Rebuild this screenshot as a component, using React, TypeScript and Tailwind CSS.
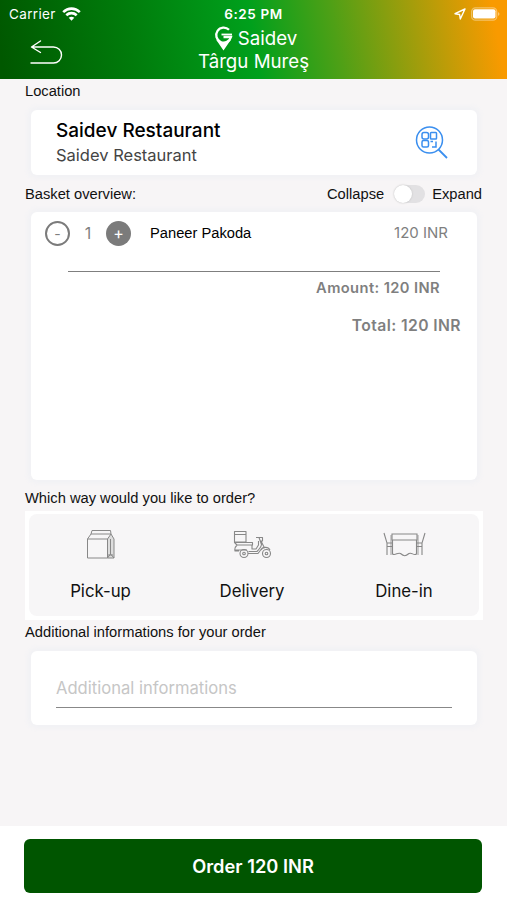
import type { ReactNode } from "react";

const sans = "font-['Liberation_Sans',Arial,sans-serif]";
const card = "rounded-[6px] bg-white shadow-[0_0_4px_4px_#f2f2f5]";

function Label({ children }: { children: ReactNode }) {
  return <span className={`${sans} text-[14.7px] leading-[18px] whitespace-nowrap text-[#111]`}>{children}</span>;
}

function StatusBar() {
  return (
    <div className="grid h-[27px] grid-cols-3 items-center px-[9px] text-[13.5px] leading-[18px]">
      <div className="flex items-center gap-[6px]">
        <span className="tracking-[0.35px]">Carrier</span>
        <svg width="19" height="14" viewBox="0 0 19 14" fill="none" stroke="#fff" strokeWidth="2.6">
          <path d="M1.2 5.1C6 .5 13 .5 17.8 5.1M4.3 8.2c3-2.8 7.4-2.8 10.4 0" />
          <path d="M6.7 10.8Q9.5 8.5 12.3 10.8L9.5 13.8Z" fill="#fff" stroke="none" />
        </svg>
      </div>
      <span className="text-center font-semibold tracking-[0.6px]">6:25 PM</span>
      <div className="flex items-center justify-end gap-[5px]">
        <svg width="12" height="12" viewBox="0 0 12 12" fill="none" stroke="#fff" strokeWidth="1.4" strokeLinejoin="round">
          <path d="M11 1 1 5.7l4.6.8L6.3 11Z" />
        </svg>
        <svg className="-mr-[3px]" width="30" height="14" viewBox="0 0 30 14">
          <rect x=".7" y=".8" width="25" height="12.4" rx="3.8" fill="none" stroke="#fff" strokeOpacity=".4" strokeWidth="1.3" />
          <rect x="2" y="2.2" width="22.5" height="9.4" rx="2" fill="#fff" />
          <path d="M27 5v4q3-2 0-4" fill="#fff" fillOpacity=".45" />
        </svg>
      </div>
    </div>
  );
}

function Header() {
  return (
    <header className="h-[79px] shrink-0 bg-[linear-gradient(80deg,#005800_1%,#007b0b_26%,#00a01c_50%,#4fa016_66%,#f99a00_97%)] text-white">
      <StatusBar />
      <div className="grid grid-cols-[1fr_140px_1fr]">
        <svg className="mt-[12px] ml-[30px]" width="33" height="26" viewBox="0 0 33 26" fill="none" stroke="#fff" strokeWidth="1.4" strokeLinecap="round" strokeLinejoin="round">
          <path d="M10.5 2 1.5 8l9 5.5M1.5 8H23.500a8 8 0 0 1 0 16H1" />
        </svg>
        <div className="flex flex-col items-center text-[18.7px] leading-[24px]">
          <div className="flex h-[23px] items-center gap-[5px] pl-[4px]">
            <svg width="19" height="25" viewBox="0 0 19 25" fill="none" stroke="#fff">
              <path d="M15 3.800A7.500 7.500 0 1 0 17 11H9.500" strokeWidth="2.300" />
              <path d="M7.500 8.500H18" strokeWidth="1.800" />
              <path d="M2 13.500Q9.500 19 17 13.500L9.500 24.500Z" fill="#fff" stroke="none" />
            </svg>
            <span>Saidev</span>
          </div>
          <span className="whitespace-nowrap">Târgu Mureş</span>
        </div>
      </div>
    </header>
  );
}

function LocationCard() {
  return (
    <section className={`${card} mx-[6px] mt-[10px] flex h-[65px] items-center justify-between pr-[29px] pl-[25px]`}>
      <div className="flex flex-col">
        <span className="text-[19px] leading-[25px] font-medium text-black">Saidev Restaurant</span>
        <span className="text-[16.500px] leading-[24px] text-[#444]">Saidev Restaurant</span>
      </div>
      <svg width="33" height="33" viewBox="0 0 33 33" fill="none" stroke="#3b8fef" strokeWidth="1.500">
        <circle cx="14.500" cy="14" r="13" />
        <path d="m23.500 23.500 8.500 8.500" strokeWidth="1.800" />
        <rect x="7" y="6.500" width="6.500" height="6.500" rx="2" />
        <rect x="15.500" y="6.500" width="6" height="6.500" rx=".8" />
        <rect x="7" y="14.500" width="6.500" height="6.500" rx="1.500" />
        <path d="M15.500 15.500h2.500M21 15.500v5.500H17" />
      </svg>
    </section>
  );
}

function Basket() {
  return (
    <section className={`${card} mx-[6px] mt-[9px] h-[268px] pt-[8px] text-[#7f7f7f]`}>
      <div className="flex h-[26px] items-center pr-[29px] pl-[14px]">
        <button className="flex size-[25px] items-center justify-center rounded-full border-2 border-[#7b7b7b] text-[14px]">-</button>
        <span className="w-[36px] text-center text-[16px]">1</span>
        <button className="flex size-[25px] items-center justify-center rounded-full bg-[#7b7b7b] text-[16px] text-white">+</button>
        <span className={`${sans} ml-[19px] text-[14.700px] leading-[18px] text-black`}>Paneer Pakoda</span>
        <span className="ml-auto text-[15px] leading-[20px]">120 INR</span>
      </div>
      <div className="mt-[25px] mr-[37px] ml-[37px] h-px bg-[#7f7f7f]" />
      <div className="mt-[6px] pr-[37px] text-right text-[14.700px] leading-[20px] font-semibold tracking-[0.4px]">Amount: 120 INR</div>
      <div className="mt-[18px] pr-[16px] text-right text-[15.700px] leading-[20px] font-semibold tracking-[0.4px]">Total: 120 INR</div>
    </section>
  );
}

function BagIcon() {
  return (
    <svg width="30" height="31" viewBox="0 0 30 31" fill="none" stroke="#888" strokeWidth="1">
      <path fill="#ddd" stroke="none" d="M21.500 10 25 5l3 5v19h-6.500Z" />
      <path d="M1.500 10 5 5h20l-3.500 5ZM5 5l1-3.500h18.500l.5 3.500M1.500 10v19h20V10M25 5l3 5v19h-6.500M24.500 10v15l-3 4M24.500 25l3.500 4M22 26h5" />
    </svg>
  );
}

function ScooterIcon() {
  return (
    <svg width="39" height="29" viewBox="0 0 39 29" fill="none" stroke="#888" strokeWidth="1.100" strokeLinejoin="round">
      <path d="M1.500 1.500h11.500V12H1.500ZM1.500 4.500H13M1.500 12.500h18v2.500H4ZM4 15C2 17 1.500 19 2 21h4M15.500 21.500H24c2-2 4-4 4.500-7L26 7.500h-3M26 7.500h3.500V11H27M28 11l3.500 7M19 15v4h4l2.500-4v-4M2 20h12" />
      <circle cx="11" cy="23.500" r="4" />
      <circle cx="11" cy="23.500" r="1.300" />
      <circle cx="33.500" cy="23.500" r="4" />
      <circle cx="33.500" cy="23.500" r="1.300" />
      <path d="M28 20c1-3 7-4 9 0M15 23.500h10l3-4" />
    </svg>
  );
}

function TableIcon() {
  return (
    <svg width="43" height="25" viewBox="0 0 43 25" fill="none" stroke="#888" strokeWidth="1.100">
      <path d="M9 2h25v6H9ZM9.500 8v14c3 2 5-2 8-.5 3.500 3 5 3 8.500 0 3-1.500 4.500 2.500 7.500 .5V8M1 1l3 10v12M42 1l-3 10v12M4 11h5M4 14.500h5M34 11h5M34 14.500h5" />
      <path d="M8 3v20M35 3v20" strokeWidth=".8" />
    </svg>
  );
}

function OrderOption({ icon, label }: { icon: ReactNode; label: string }) {
  return (
    <button className="flex flex-col items-center">
      <span className="flex h-[60px] items-center justify-center">{icon}</span>
      <span className="mt-[5px] text-[16.800px] leading-[24px] text-[#111]">{label}</span>
    </button>
  );
}

export default function App() {
  return (
    <div className="flex h-[900px] w-[507px] flex-col overflow-hidden bg-[#f7f5f6] font-[Inter,sans-serif]">
      <Header />
      <main className="flex flex-1 flex-col pr-[24px] pl-[25px]">
        <div className="mt-[3px] flex h-[18px] items-center"><Label>Location</Label></div>
        <LocationCard />
        <div className="mt-[9px] flex h-[19px] items-center justify-between pr-px">
          <Label>Basket overview:</Label>
          <div className="flex items-center">
            <Label>Collapse</Label>
            <button className="mr-[7px] ml-[10px] flex h-[18px] w-[31px] items-center rounded-full bg-[#e2e1e3]">
              <span className="size-[18px] rounded-full bg-white shadow-[0_0_2px_#bbb]" />
            </button>
            <Label>Expand</Label>
          </div>
        </div>
        <Basket />
        <div className="mt-[9px] flex h-[18px] items-center"><Label>Which way would you like to order?</Label></div>
        <section className="mt-[4px] h-[109px] bg-white px-[4px] pt-[3px] pb-[4px]">
          <div className="grid h-full grid-cols-[143px_160px_144px] rounded-[8px] bg-[#f7f6f7]">
            <OrderOption icon={<BagIcon />} label="Pick-up" />
            <OrderOption icon={<ScooterIcon />} label="Delivery" />
            <OrderOption icon={<TableIcon />} label="Dine-in" />
          </div>
        </section>
        <div className="mt-[3px] flex h-[18px] items-center"><Label>Additional informations for your order</Label></div>
        <section className={`${card} mx-[6px] mt-[10px] h-[74px] pt-[25px] pr-[25px] pl-[25px]`}>
          <input
            className="block h-[32px] w-full border-b border-[#888] bg-transparent pb-[7px] text-[16.600px] outline-none placeholder:text-[#c6c6c6]"
            placeholder="Additional informations"
          />
        </section>
      </main>
      <footer className="h-[74px] shrink-0 bg-white pt-[13px] pr-[25px] pl-[24px]">
        <button className="h-[54px] w-full rounded-[6px] bg-[#005500] pt-[2px] text-[18.300px] font-semibold text-white">Order 120 INR</button>
      </footer>
    </div>
  );
}
